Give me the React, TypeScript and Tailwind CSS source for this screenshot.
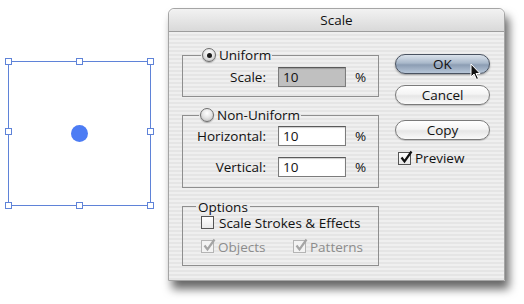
import React from "react";

const handles = [
	"-left-[4px] -top-[4px]",
	"left-[67px] -top-[4px]",
	"-right-[4px] -top-[4px]",
	"-left-[4px] top-[66px]",
	"-right-[4px] top-[66px]",
	"-left-[4px] -bottom-[4px]",
	"left-[67px] -bottom-[4px]",
	"-right-[4px] -bottom-[4px]",
];

function Radio({ checked }: { checked?: boolean }) {
	return (
		<span className="w-[14px] h-[14px] rounded-full border border-[#6d6d6d] bg-[radial-gradient(circle_at_50%_35%,#ffffff_0%,#e6e6e6_45%,#b9b9b9_100%)] flex items-center justify-center shadow-[0_1px_1px_rgba(0,0,0,0.25)]">
			{checked && <span className="w-[5px] h-[5px] rounded-full bg-[#1a1a1a]" />}
		</span>
	);
}

function Check({ checked, disabled }: { checked?: boolean; disabled?: boolean }) {
	return (
		<span
			className={`relative w-[13px] h-[13px] border ${
				disabled ? "border-[#b4b4b4] bg-[#f3f3f3]" : "border-[#555] bg-[linear-gradient(#ffffff,#e8e8e8)]"
			}`}
		>
			{checked && (
				<svg
					viewBox="0 0 14 14"
					className="absolute left-[0px] -top-[3px] w-[14px] h-[14px]"
				>
					<path
						d="M2.5 7.5 L5.5 11.5 L12.5 1.5"
						fill="none"
						stroke={disabled ? "#a5a5a5" : "#111"}
						strokeWidth="2.2"
					/>
				</svg>
			)}
		</span>
	);
}

function Field({ value, disabled }: { value: string; disabled?: boolean }) {
	return (
		<div
			className={`w-[68px] h-[20px] border border-[#7c7c7c] border-t-[#5a5a5a] pl-[4px] flex items-center shadow-[inset_0_1px_1px_rgba(0,0,0,0.2)] ${
				disabled ? "bg-[#c0c0c0]" : "bg-white"
			}`}
		>
			{value}
		</div>
	);
}

function Button({ label, primary }: { label: string; primary?: boolean }) {
	return (
		<div
			className={`w-[95px] h-[20px] rounded-full border flex items-center justify-center ${
				primary
					? "border-[#4a5361] bg-[linear-gradient(#dbe3ec_0%,#a9b8ca_45%,#8c9db3_55%,#b7c6d8_100%)] shadow-[0_1px_2px_rgba(0,0,0,0.35)]"
					: "border-[#7a7a7a] bg-[linear-gradient(#ffffff_0%,#f4f4f4_45%,#e6e6e6_55%,#fafafa_100%)] shadow-[0_1px_1px_rgba(0,0,0,0.2)]"
			}`}
		>
			{label}
		</div>
	);
}

export default function App() {
	return (
		<div className="w-[524px] h-[304px] bg-white flex items-start font-['Open_Sans',sans-serif] text-[13.5px] text-[#111]">
			<div className="relative ml-[8px] mt-[61px] w-[143px] h-[145px] border border-[#5f83d8] flex items-center justify-center">
				{handles.map((pos, i) => (
					<span
						key={i}
						className={`absolute ${pos} w-[7px] h-[7px] border border-[#5f83d8] bg-white`}
					/>
				))}
				<span className="w-[17px] h-[17px] rounded-full bg-[#4c7cf4]" />
			</div>

			<div className="ml-[17px] mt-[8px] w-[337px] h-[273px] flex flex-col rounded-t-[6px] shadow-[4px_8px_10px_rgba(0,0,0,0.6)] border border-[#a5a5a5]">
				<div className="h-[23px] rounded-t-[6px] bg-[linear-gradient(#f2f2f2,#d9d9d9)] border-b border-[#9c9c9c] flex items-center justify-center pt-[1px]">
					Scale
				</div>
				<div className="flex-1 flex px-[13px] pt-[15px] bg-[repeating-linear-gradient(#efefef_0px,#efefef_2px,#e5e5e5_2px,#e5e5e5_4px)]">
					<div className="w-[197px] flex flex-col">
						<fieldset className="border border-[#8e8e8e] pb-[9px]">
							<legend className="ml-[18px] px-[1px] flex items-center gap-[3px] h-[16px]">
								<Radio checked />
								<span>Uniform</span>
							</legend>
							<div className="mt-[4px] flex items-center">
								<span className="w-[83px] text-right">Scale:</span>
								<span className="ml-[12px]">
									<Field value="10" disabled />
								</span>
								<span className="ml-[9px]">%</span>
							</div>
						</fieldset>

						<fieldset className="mt-[10px] border border-[#8e8e8e] pb-[10px]">
							<legend className="ml-[16px] px-[1px] flex items-center gap-[3px] h-[16px]">
								<Radio />
								<span>Non-Uniform</span>
							</legend>
							<div className="mt-[3px] flex flex-col gap-[10px]">
								<div className="flex items-center">
									<span className="w-[83px] text-right">Horizontal:</span>
									<span className="ml-[12px]">
										<Field value="10" />
									</span>
									<span className="ml-[9px]">%</span>
								</div>
								<div className="flex items-center">
									<span className="w-[83px] text-right">Vertical:</span>
									<span className="ml-[12px]">
										<Field value="10" />
									</span>
									<span className="ml-[9px]">%</span>
								</div>
							</div>
						</fieldset>

						<fieldset className="mt-[11px] border border-[#8e8e8e] pb-[10px]">
							<legend className="ml-[13px] px-[2px] h-[16px] leading-[16px]">
								Options
							</legend>
							<div className="pl-[18px] flex flex-col gap-[8px]">
								<div className="flex items-center gap-[5px] h-[16px]">
									<Check />
									<span>Scale Strokes &amp; Effects</span>
								</div>
								<div className="flex items-center h-[16px] text-[#8c8c8c]">
									<Check checked disabled />
									<span className="ml-[4px] w-[75px]">Objects</span>
									<Check checked disabled />
									<span className="ml-[4px]">Patterns</span>
								</div>
							</div>
						</fieldset>
					</div>

					<div className="ml-[16px] pt-[7px] flex flex-col">
						<div className="relative">
							<Button label="OK" primary />
							<svg
								viewBox="0 0 12 18"
								className="absolute left-[75px] top-[9px] w-[12px] h-[18px]"
							>
								<path
									d="M1 1 L1 14 L4 11 L6.5 16.5 L8.5 15.5 L6 10.5 L10 10.5 Z"
									fill="#111"
									stroke="#fff"
									strokeWidth="1"
								/>
							</svg>
						</div>
						<div className="mt-[11px]">
							<Button label="Cancel" />
						</div>
						<div className="mt-[15px]">
							<Button label="Copy" />
						</div>
						<div className="mt-[8px] ml-[3px] flex items-center gap-[4px]">
							<Check checked />
							<span>Preview</span>
						</div>
					</div>
				</div>
			</div>
		</div>
	);
}
